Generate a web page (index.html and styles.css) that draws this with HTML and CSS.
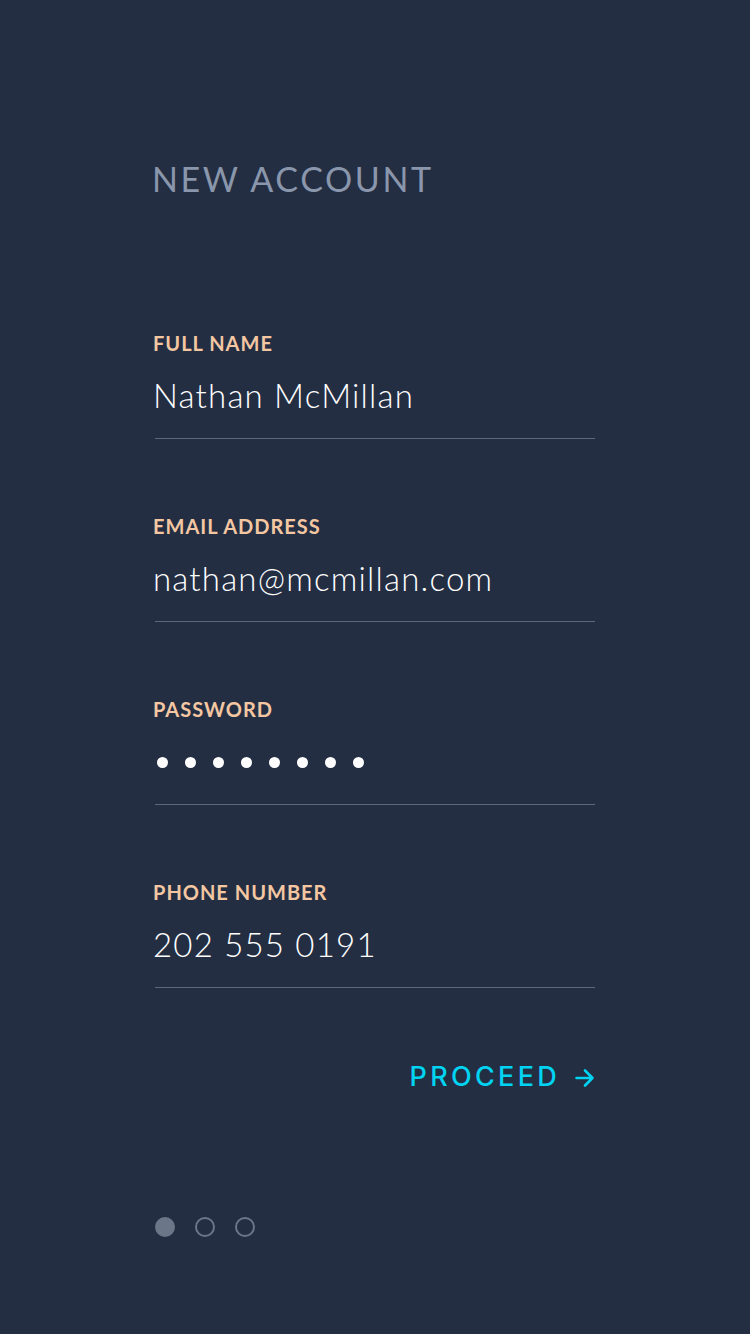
FILE: index.html
```html
<!DOCTYPE html>
<html>
<head>
<meta charset="utf-8">
<link rel="stylesheet" href="styles.css">
</head>
<body>
<div class="screen">
  <h1 class="title">NEW ACCOUNT</h1>
  <form class="form">
    <div class="field">
      <div class="label">FULL NAME</div>
      <div class="value">Nathan McMillan</div>
    </div>
    <div class="field">
      <div class="label">EMAIL ADDRESS</div>
      <div class="value">nathan@mcmillan.com</div>
    </div>
    <div class="field">
      <div class="label">PASSWORD</div>
      <div class="dots">
        <span class="dot"></span><span class="dot"></span><span class="dot"></span><span class="dot"></span>
        <span class="dot"></span><span class="dot"></span><span class="dot"></span><span class="dot"></span>
      </div>
    </div>
    <div class="field">
      <div class="label">PHONE NUMBER</div>
      <div class="value">202 555 0191</div>
    </div>
  </form>
  <div class="actions">
    <div class="proceed">
      <span class="proceed-text">PROCEED</span>
      <svg class="arrow" width="20" height="20" viewBox="0 0 20 20"><path d="M1.5 10 H17.5 M10 2.5 L17.5 10 L10 17.5" fill="none" stroke="#00d4f2" stroke-width="2.6" stroke-linecap="round" stroke-linejoin="round"/></svg>
    </div>
  </div>
  <div class="pager">
    <span class="pdot active"></span>
    <span class="pdot"></span>
    <span class="pdot"></span>
  </div>
</div>
</body>
</html>
```

FILE: styles.css
```css
html, body {
  margin: 0;
  padding: 0;
  background: #232e43;
}
body {
  font-family: Lato, "Open Sans", sans-serif;
  width: 750px;
  height: 1334px;
  overflow: hidden;
}
.screen {
  padding: 158.8px 155px 0 154px;
  display: flex;
  flex-direction: column;
}
.title {
  margin: 0 0 0 -2px;
  font-size: 34px;
  line-height: 1.2;
  font-weight: 400;
  letter-spacing: 2.6px;
  color: #8a96ab;
}
.form {
  display: flex;
  flex-direction: column;
  gap: 74.6px;
  margin-top: 131px;
}
.field {
  display: flex;
  flex-direction: column;
  border-bottom: 1px solid #5d687a;
  margin-left: 1px;
}
.label {
  margin-left: -2px;
  font-size: 20px;
  line-height: 24px;
  font-weight: 700;
  letter-spacing: 1px;
  color: #f4c7a2;
}
.value {
  margin-left: -2px;
  margin-top: 21.4px;
  margin-bottom: 23px;
  font-size: 33px;
  line-height: 39px;
  font-weight: 300;
  letter-spacing: 1.2px;
  color: #ffffff;
}
.dots {
  margin-top: 21.4px;
  margin-bottom: 23px;
  height: 39px;
  display: flex;
  align-items: center;
  gap: 17px;
  padding-top: 3px;
  box-sizing: border-box;
  padding-left: 2px;
}
.dot {
  width: 11px;
  height: 11px;
  border-radius: 50%;
  background: #ffffff;
}
.actions {
  display: flex;
  justify-content: flex-end;
  margin-top: 73.5px;
}
.proceed {
  display: flex;
  align-items: center;
  gap: 15px;
}
.proceed-text {
  font-family: Inter, "Open Sans", sans-serif;
  font-size: 27px;
  font-weight: 500;
  line-height: 1.2;
  letter-spacing: 3.3px;
  color: #00d4f2;
}
.arrow {
  display: block;
  margin-top: 1px;
}
.pager {
  display: flex;
  gap: 20px;
  margin-top: 123px;
  margin-left: 1px;
}
.pdot {
  width: 20px;
  height: 20px;
  border-radius: 50%;
  box-sizing: border-box;
  border: 2px solid #6b7689;
}
.pdot.active {
  background: #6b7689;
}
```
